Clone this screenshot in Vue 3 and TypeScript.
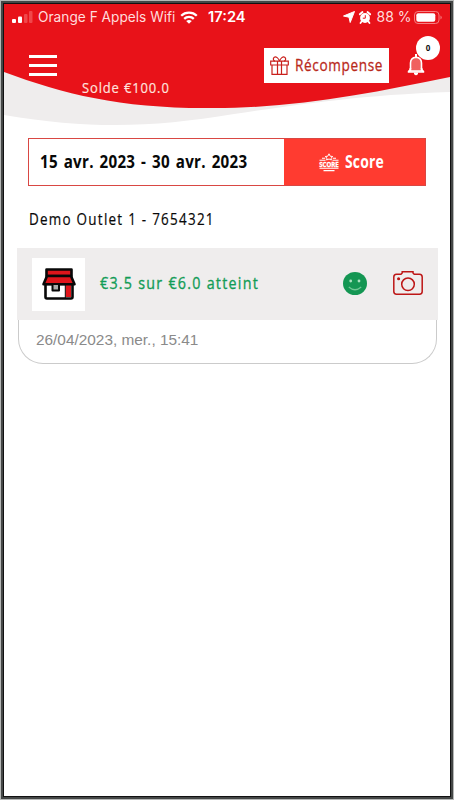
<script setup lang="ts">
const network = 'Orange F Appels Wifi'
const time = '17:24'
const balance = 'Solde €100.0'
const period = '15 avr. 2023 - 30 avr. 2023'
const outlet = 'Demo Outlet 1 - 7654321'
const progress = '€3.5 sur €6.0 atteint'
const visit = '26/04/2023, mer., 15:41'
</script>

<template>
  <div class="frame">
    <div class="screen">
      <header class="header">
        <svg class="wave" viewBox="0 0 446 122" width="446" height="122">
          <path d="M0 60H446V88C350 91 280 103 230 110C150 123 90 126 0 111Z" fill="#efeded" />
          <path d="M0 0H446V73C367 89 295 104 210 104C120 105 62 91 0 68Z" fill="#e81219" />
        </svg>

        <div class="status">
          <svg class="signal" viewBox="0 0 21 12" width="21" height="12">
            <rect x="0" y="8" width="4" height="4" rx="1" fill="#fff" />
            <rect x="6" y="5.5" width="4" height="6.5" rx="1" fill="#fff" />
            <rect x="12" y="3" width="3.5" height="9" rx="1" fill="#f0474b" />
            <rect x="17" y="0" width="3.5" height="12" rx="1" fill="#f0474b" />
          </svg>
          <span class="slot network"><span class="t">{{ network }}</span></span>
          <svg class="wifi" viewBox="0 0 18 13" width="18" height="13">
            <path d="M1.2 4.8C5.5.6 12.5.6 16.8 4.8M4.2 7.8C6.8 5.3 11.2 5.3 13.8 7.8" fill="none" stroke="#fff" stroke-width="2.300" />
            <path d="M6.2 10Q9 7.8 11.8 10L9 12.8Z" fill="#fff" />
          </svg>
          <span class="slot time"><span class="t">{{ time }}</span></span>
          <svg class="arrow" viewBox="0 0 12 12" width="12" height="12">
            <path d="M11.500.5L7.200 11.500L6 6.200L.5 5Z" fill="#fff" stroke="#fff" stroke-linejoin="round" />
          </svg>
          <svg class="alarm" viewBox="0 0 12 13" width="12" height="13">
            <path d="M.8 3.300L3.500 1M11.200 3.300L8.500 1M2.600 10.500L1.500 12M9.400 10.500L10.500 12" stroke="#fff" stroke-width="1.800" stroke-linecap="round" />
            <circle cx="6" cy="7" r="4.900" fill="#fff" />
            <path d="M6.300 4.200V7.200H3.800" fill="none" stroke="#e81219" />
          </svg>
          <span class="slot charge"><span class="t">88 %</span></span>
          <svg class="battery" viewBox="0 0 28 13" width="28" height="13">
            <rect x=".5" y=".5" width="24.500" height="12" rx="3.500" fill="none" stroke="#f48083" />
            <rect x="2.300" y="2.200" width="19" height="8.600" rx="2" fill="#fff" />
            <path d="M26.500 4.500Q29 6.500 26.500 8.500Z" fill="#f48083" />
          </svg>
        </div>

        <div class="toolbar">
          <button class="menu" aria-label="Menu"><i></i><i></i><i></i></button>
          <div class="slot balance"><span class="t">{{ balance }}</span></div>
          <button class="reward">
            <svg viewBox="0 0 19 19" width="19" height="19" fill="none" stroke="#c9201c" stroke-width="1.200">
              <path d="M.7 5.200H18.300V9H.7ZM2 9V18.300H17V9M7.500 5.200V18.300M11.500 5.200V18.300" />
              <path d="M9.500 5.200C8.500 2 6 .2 4.300 1.200C2.500 2.500 3.500 5 5 5.200M9.500 5.200C10.500 2 13 .2 14.700 1.200C16.500 2.500 15.500 5 14 5.200" />
            </svg>
            <span class="slot reward-label"><span class="t">Récompense</span></span>
          </button>
          <div class="bell">
            <svg viewBox="0 0 18 22" width="18" height="22">
              <path d="M3.500 17V9C3.500 5.500 5.500 3.500 9 3.200C12.500 3.500 14.500 5.500 14.500 9V17Z" fill="#f0605f" stroke="#fff" stroke-width="1.600" />
              <path d="M9 0V3.500" stroke="#fff" stroke-width="2" />
              <path d="M1 18Q3.500 16.500 3.500 14M17 18Q14.500 16.500 14.500 14M.8 18H17.200" fill="none" stroke="#fff" stroke-width="1.700" />
              <path d="M7 18.500H11V20Q9 22.500 7 20Z" fill="#fff" />
            </svg>
            <span class="badge">0</span>
          </div>
        </div>
      </header>

      <main>
        <div class="filter">
          <div class="period"><span class="slot"><span class="t">{{ period }}</span></span></div>
          <button class="score">
            <svg viewBox="0 0 20 19" width="20" height="19">
              <path d="M10 .8L11.200 3.200L13.800 3.500L12 5.200L12.400 7L10 6L7.600 7L8 5.200L6.200 3.500L8.800 3.200Z" fill="none" stroke="#fff" stroke-width="1" />
              <path d="M3 5.300H6.200M13.800 5.300H17M.5 7.300H6.500M13.500 7.300H19.500M.5 15.300H19.500M4.500 17.600H15.500" stroke="#fff" stroke-width="1.100" />
              <text x=".2" y="13.700" textLength="19.600" lengthAdjust="spacingAndGlyphs" class="score-mark">SCORE</text>
            </svg>
            <span class="slot score-label"><span class="t">Score</span></span>
          </button>
        </div>

        <div class="slot outlet"><span class="t">{{ outlet }}</span></div>

        <article class="visit">
          <div class="summary">
            <div class="store">
              <svg viewBox="0 0 34 32" width="34" height="32" stroke="#080808" stroke-width="2.600" stroke-linejoin="round">
                <path d="M3.500 16V29Q3.500 30.500 5 30.500H29Q30.500 30.500 30.500 29V16Z" fill="#fff" />
                <path d="M23.500 16H29V29H23.500Z" fill="#e0151b" stroke="none" />
                <path d="M4.500 1.500H29.500V8H4.500Z" fill="#e0151b" />
                <path d="M5 8H29L32.500 16.300H1.500Z" fill="#e0151b" />
                <path d="M10.500 17V22.500H17V17" fill="#aaa" stroke-width="2" />
                <path d="M23.300 17V30" stroke-width="1" />
              </svg>
            </div>
            <div class="slot progress"><span class="t">{{ progress }}</span></div>
            <svg class="smile" viewBox="0 0 24 23" width="24" height="23">
              <ellipse cx="12" cy="11.500" rx="12" ry="11.500" fill="#149653" />
              <circle cx="7.700" cy="9" r="1.400" fill="#a9e1bf" />
              <circle cx="16" cy="9" r="1.400" fill="#a9e1bf" />
              <path d="M5.800 15Q12 20.500 18.200 15" fill="none" stroke="#70c795" stroke-width="1.200" />
            </svg>
            <svg class="camera" viewBox="0 0 30 24" width="30" height="24" fill="none" stroke="#bd1616" stroke-width="1.500">
              <path d="M3.500 3.200H8L9.200 2V.8H20V2L21.200 3.200H26.500Q29.200 3.200 29.200 6V20.500Q29.200 23.200 26.500 23.200H3.500Q.8 23.200.8 20.500V6Q.8 3.200 3.500 3.200Z" />
              <circle cx="15" cy="13.300" r="6.300" />
              <circle cx="5.600" cy="7.700" r=".8" fill="#bd1616" />
            </svg>
          </div>
          <div class="date"><span class="slot"><span class="t">{{ visit }}</span></span></div>
        </article>
      </main>
    </div>
  </div>
</template>

<style>
body { margin: 0; background: #b9bbba; }
</style>

<style scoped>
* { box-sizing: border-box; }
button { border: 0; padding: 0; margin: 0; color: inherit; background: none; }
svg { display: block; flex: none; overflow: visible; }
.frame { width: 454px; height: 800px; padding: 1px; background: #b5b7b6; }
.screen { width: 452px; height: 798px; border: 2px solid #444746; outline: 1px solid #111; outline-offset: -3px; padding: 1px; background: #fff; font-family: "Open Sans", "Noto Sans", sans-serif; }
.slot { display: block; flex: none; white-space: nowrap; }
.t { display: inline-block; white-space: nowrap; transform-origin: 0 50%; }

.header { position: relative; height: 134px; color: #fff; }
.wave { position: absolute; left: 0; top: 0; }
.status { position: relative; display: flex; align-items: center; height: 26px; padding-left: 8px; font: 14px/26px Inter, sans-serif; }
.network { width: 138px; margin-left: 4.5px; }
.network .t { color: #ffdcdc; transform: scaleX(.978); }
.wifi { margin-left: 4.5px; }
.time { width: 38px; margin-left: 9.5px; font-weight: 600; }
.time .t { transform: scaleX(1.05); }
.arrow { margin-left: 97px; }
.alarm { margin-left: 4px; }
.charge { width: 36px; margin-left: 6px; color: #ffdcdc; }
.battery { margin-left: 1px; }
.toolbar { position: relative; display: flex; align-items: flex-start; height: 72px; padding-left: 25px; }
.menu { display: grid; gap: 6px; width: 28px; margin-top: 25px; }
.menu i { height: 3px; background: #fff; }
.balance { width: 88px; margin: 46px 0 0 25px; font-size: 15px; line-height: 22px; color: #ffe3df; }
.reward { display: flex; align-items: center; width: 125px; height: 35px; margin: 18px 0 0 94px; padding-left: 6px; background: #fff; color: #b9291b; }
.reward-label { width: 88px; margin: -2px 0 0 6px; font: 17px/24px "Open Sans", sans-serif; text-align: left; }
.bell { position: relative; margin: 24px 0 0 18px; }
.badge { position: absolute; left: 9px; top: -18px; width: 24px; height: 24px; border-radius: 50%; background: #fff; color: #111; font: bold 8px/24px "Open Sans", sans-serif; text-align: center; }

.filter { display: flex; width: 398px; height: 48px; margin-left: 24px; border: 1px solid #d94743; }
.period { width: 255px; padding-left: 11px; font-size: 18px; font-weight: 700; line-height: 45px; color: #080808; }
.score { display: flex; align-items: center; flex: 1; padding-left: 35px; background: #ff3b30; color: #fff; }
.score-mark { font: bold 6.5px "Open Sans", sans-serif; fill: #fff; stroke: #fff; stroke-width: .3px; }
.score-label { margin: -1px 0 0 6px; font: bold 17px/24px "Open Sans", sans-serif; }
.outlet { margin: 21px 0 0 24.5px; font-size: 16px; line-height: 24px; color: #080808; }
.visit { width: 421px; margin: 17px 0 0 13px; }
.summary { display: flex; align-items: center; height: 72px; padding-left: 15px; background: #efeded; }
.store { display: grid; place-items: center; width: 53px; height: 53px; background: #fff; }
.store svg { margin-top: -1px; }
.progress { width: 258px; margin-top: -2px; padding-left: 15px; font-size: 17px; line-height: 24px; color: #129c56; }
.smile { margin-top: -1px; }
.camera { margin: -2px 0 0 26px; }
.date { height: 44px; margin: 0 1px; padding: 9px 0 0 16.5px; border: solid #cbcbcb; border-width: 0 1.5px 1.5px; border-radius: 0 0 25px 25px; font: 15px/22px "Liberation Sans", sans-serif; color: #8a8a8a; }
.date .t { transform: scaleX(1.025); }

.balance .t { transform: scaleX(.865); letter-spacing: 1px; -webkit-text-stroke: .2px; }
.reward-label .t { transform: scaleX(.8); letter-spacing: .8px; -webkit-text-stroke: .3px; }
.period .t { transform: scaleX(.842); letter-spacing: .3px; word-spacing: 2px; }
.score-label .t { transform: scaleX(.82); letter-spacing: .2px; }
.outlet .t { transform: scaleX(.84); letter-spacing: 1.5px; -webkit-text-stroke: .2px; }
.progress .t { transform: scaleX(.84); letter-spacing: 1.5px; -webkit-text-stroke: .35px; }
</style>
